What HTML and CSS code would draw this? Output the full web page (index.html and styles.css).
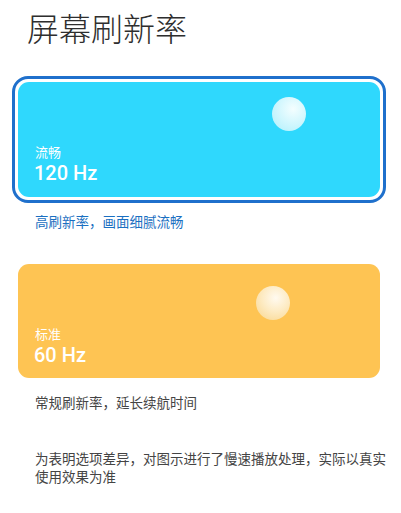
FILE: index.html
```html
<!DOCTYPE html>
<html lang="zh-CN">
<head>
<meta charset="utf-8">
<title>屏幕刷新率</title>
<link rel="stylesheet" href="styles.css">
</head>
<body>
<div class="page">
  <h1 class="title">屏幕刷新率</h1>

  <div class="option selected">
    <div class="card card-blue">
      <span class="orb orb-blue"></span>
      <div class="card-label">流畅</div>
      <div class="card-value">120 Hz</div>
    </div>
  </div>
  <p class="caption caption-active">高刷新率，画面细腻流畅</p>

  <div class="option option-second">
    <div class="card card-orange">
      <span class="orb orb-orange"></span>
      <div class="card-label">标准</div>
      <div class="card-value">60 Hz</div>
    </div>
  </div>
  <p class="caption">常规刷新率，延长续航时间</p>

  <p class="note">为表明选项差异，对图示进行了慢速播放处理，实际以真实使用效果为准</p>
</div>
</body>
</html>
```

FILE: styles.css
```css
html, body {
  margin: 0;
  padding: 0;
  background: #ffffff;
}

.page {
  width: 401px;
  height: 513px;
  overflow: hidden;
  font-family: "Noto Sans CJK SC", "Noto Sans", sans-serif;
}

.title {
  margin: 7px 0 0 27px;
  font-size: 32px;
  line-height: 40px;
  font-weight: 200;
  color: #2e2e2e;
  letter-spacing: 0;
}

.option {
  margin: 29px 15px 0 12px;
  padding: 3px;
  border: 3px solid transparent;
  border-radius: 16px;
}

.option.selected {
  border-color: #1f70cc;
}

.option-second {
  margin-top: 27px;
}

.card {
  position: relative;
  height: 115px;
  border-radius: 11px;
  display: flex;
  flex-direction: column;
  justify-content: flex-end;
  padding: 0 0 12px 17px;
  box-sizing: border-box;
  color: #ffffff;
}

.card-blue {
  background: #2fd8fd;
}

.card-orange {
  height: 114px;
  background: #fec453;
  padding-bottom: 11px;
}

.card-label {
  font-size: 13px;
  line-height: 19px;
  font-weight: 400;
}

.card-value {
  font-family: "Roboto", "Noto Sans", sans-serif;
  font-size: 20px;
  line-height: 24px;
  font-weight: 500;
  margin-left: -1px;
}

.orb {
  position: absolute;
  width: 34px;
  height: 34px;
  border-radius: 50%;
}

.orb-blue {
  left: 254px;
  top: 15px;
  background: radial-gradient(circle at 62% 35%, #f4feff 0%, #d8f8fe 40%, #aeeffb 100%);
}

.orb-orange {
  left: 238px;
  top: 22px;
  background: radial-gradient(circle at 58% 35%, #fffaf0 0%, #fdebc4 45%, #f9d589 100%);
}

.caption {
  margin: 8px 0 0 35px;
  font-size: 13.5px;
  line-height: 20px;
  color: #444444;
}

.caption-active {
  color: #1a6fc1;
}

.note {
  margin: 37px 4px 0 35px;
  font-size: 13.5px;
  line-height: 18px;
  color: #444444;
}
```
